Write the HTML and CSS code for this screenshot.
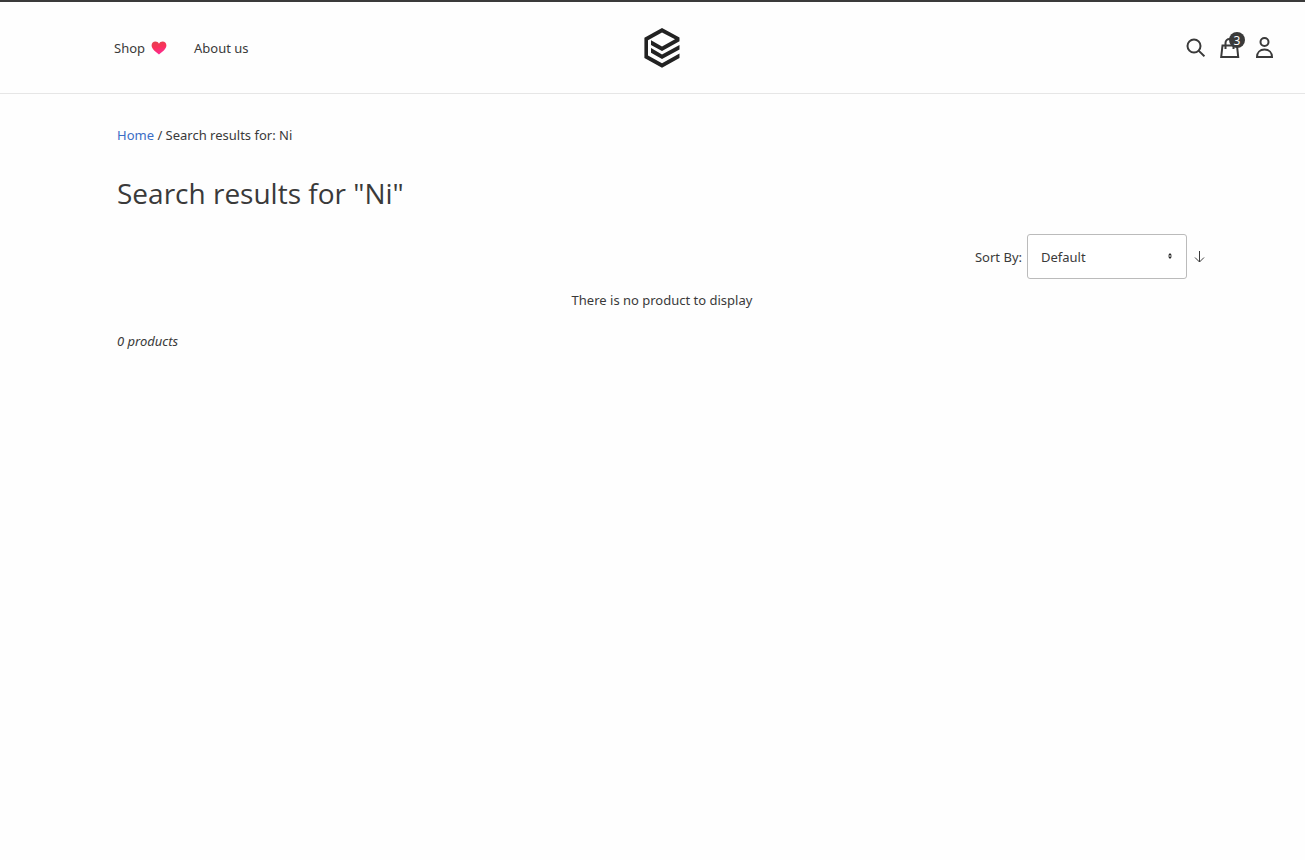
FILE: index.html
```html
<!DOCTYPE html>
<html lang="en">
<head>
<meta charset="utf-8">
<meta name="viewport" content="width=device-width, initial-scale=1">
<title>Search results for: Ni</title>
<link rel="stylesheet" href="styles.css">
</head>
<body>
<header class="header">
  <nav class="nav">
    <a class="nav-link" href="#">Shop
      <svg class="heart" viewBox="0 0 16 14" width="16" height="14" aria-hidden="true">
        <defs><linearGradient id="heart-fill" x1="0" y1="0" x2="0.3" y2="1"><stop offset="0" stop-color="#e0434f"/><stop offset="0.5" stop-color="#fa3158"/><stop offset="1" stop-color="#fb2c90"/></linearGradient></defs>
        <path fill="url(#heart-fill)" d="M8 13.6C5 11.2.6 8.2.6 4.6.6 2.2 2.3.6 4.4.6 6 .6 7.300 1.400 8 2.700 8.700 1.400 10 .6 11.600.6c2.100 0 3.800 1.600 3.800 4C15.400 8.200 11 11.200 8 13.600Z"/>
      </svg>
    </a>
    <a class="nav-link" href="#">About us</a>
  </nav>
  <a class="logo" href="#" aria-label="Home">
    <svg viewBox="0 0 36 40" width="36" height="40" fill="#222" aria-hidden="true">
      <path fill-rule="evenodd" d="M18 0 35.500 9.500V13.200L18 23 7 17V12.200L18 18.500 31 11.300 18 4.400 4 12.200V27.500L18 35.200 35.500 25.500V30L18 39.700.4 30V9.800Z"/>
      <path d="M7 20 18 26.500 35.500 17V21.500L18 31 7 24.800Z"/>
    </svg>
  </a>
  <div class="actions">
    <button class="icon-button" type="button" aria-label="Search">
      <svg viewBox="0 0 20 20" width="20" height="20" fill="none" stroke="#3a3a3a" stroke-width="2" aria-hidden="true"><circle cx="9" cy="8" r="6.500"/><path d="m13.600 12.600 5.800 5.800"/></svg>
    </button>
    <button class="icon-button cart" type="button" aria-label="Cart">
      <svg viewBox="0 0 20 22" width="20" height="22" fill="none" stroke="#3a3a3a" stroke-width="2" aria-hidden="true"><path d="M2.500 8.500h14.500l1.200 11.500H1.200Z"/><path d="M5.500 12V6a4 4 0 0 1 8 0v6"/></svg>
      <span class="badge">3</span>
    </button>
    <button class="icon-button" type="button" aria-label="Account">
      <svg viewBox="0 0 18 22" width="18" height="22" fill="none" stroke="#3a3a3a" stroke-width="2" aria-hidden="true"><circle cx="9.500" cy="5" r="4"/><path d="M2 20C2 15.500 5 12.600 9.500 12.600s7.500 2.900 7.500 7.400Z"/></svg>
    </button>
  </div>
</header>
<main class="main">
  <nav class="breadcrumb" aria-label="Breadcrumb"><a class="crumb-link" href="#">Home</a> / Search results for: Ni</nav>
  <h1 class="title">Search results for "Ni"</h1>
  <div class="toolbar">
    <label class="sort-label" for="sort">Sort By:</label>
    <div class="select-wrap">
      <select class="select" id="sort"><option>Default</option></select>
      <svg class="caret" viewBox="0 0 4 6" width="4" height="6" fill="#222" aria-hidden="true"><path d="M0 2.400 2 0 4 2.400ZM0 3.600h4L2 6Z"/></svg>
    </div>
    <button class="icon-button" type="button" aria-label="Sort ascending">
      <svg viewBox="0 0 11 12" width="11" height="12" fill="none" stroke="#3a3a3a" aria-hidden="true"><path d="M5.500 0v11M1 6.500l4.500 4.500L10 6.500"/></svg>
    </button>
  </div>
  <p class="empty">There is no product to display</p>
  <p class="count">0 products</p>
</main>
</body>
</html>
```
FILE: styles.css
```css
* { box-sizing: border-box; }
body {
  margin: 0;
  border-top: 2px solid #3a3a3a;
  background: #fefefe;
  color: #3a3a3a;
  font: 13px/20px "Segoe UI", "Noto Sans", sans-serif;
}
a { text-decoration: none; color: inherit; }
.header {
  display: grid;
  grid-template-columns: 1fr auto 1fr;
  align-items: center;
  height: 92px;
  padding: 0 32px 0 51px;
  border-bottom: 1px solid #e6e6e6;
}
.nav { display: flex; gap: 27px; padding-left: 63px; }
.nav-link { display: flex; align-items: center; gap: 6px; }
.logo { display: flex; }
.actions { display: flex; align-items: center; justify-content: flex-end; gap: 15px; }
.icon-button { display: flex; padding: 0; border: 0; background: none; }
.cart { position: relative; }
.badge {
  position: absolute;
  top: -5px;
  right: -5px;
  width: 16px;
  height: 16px;
  border-radius: 50%;
  background: #3a3a3a;
  color: #fff;
  font: 12px/18px "Segoe UI", "Noto Sans", sans-serif;
  text-align: center;
}
.main { padding: 31px 98px 0 117px; }
.crumb-link { color: #3b6dc5; }
.title {
  margin: 28px 0 21px;
  font: 400 28px/40px "Segoe UI", "Open Sans", sans-serif;
}
.toolbar { display: flex; align-items: center; justify-content: flex-end; padding-right: 2px; }
.select-wrap { position: relative; margin: 0 7px 0 5px; }
.select {
  display: block;
  width: 160px;
  height: 45px;
  padding: 0 13px;
  appearance: none;
  border: 1px solid #bbb;
  border-radius: 3px;
  background: #fff;
  color: inherit;
  font: inherit;
}
.caret { position: absolute; top: 19px; right: 15px; pointer-events: none; }
.empty { margin: 11px 0 21px; text-align: center; }
.count { margin: 0; font-style: italic; }
```
